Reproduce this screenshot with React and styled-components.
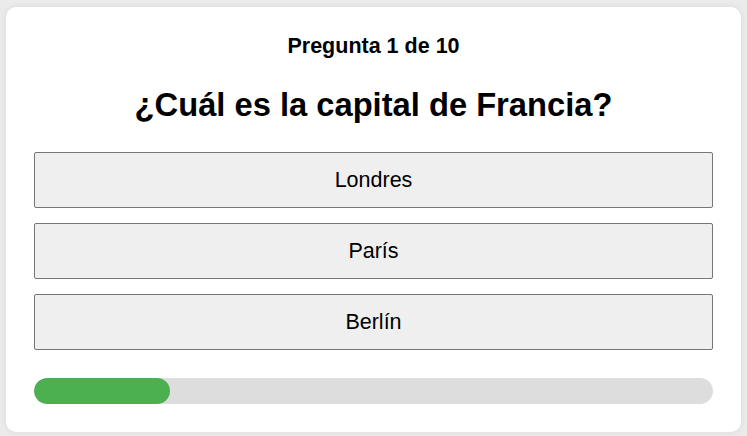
import React from 'react'
import styled, { createGlobalStyle } from 'styled-components'

const EstiloGlobal = createGlobalStyle`
    html, body {
        margin: 0;
        padding: 0;
        background-color: #ebebeb;
        font-family: "Liberation Sans", Arial, sans-serif;
    }
`

const Pagina = styled.div`
    padding: 7px 6px 4px 6px;
`

const Tarjeta = styled.div`
    display: flex;
    flex-direction: column;
    gap: 28px;
    padding: 27px 28px 28px 28px;
    background-color: white;
    border-radius: 10px;
    box-shadow: 0 0 6px rgba(0, 0, 0, 0.08);
`

const Contador = styled.h3`
    margin: 0;
    font-size: 21.5px;
    line-height: 24px;
    font-weight: bold;
    text-align: center;
    color: black;
`

const Pregunta = styled.h1`
    margin: 0;
    font-size: 32.7px;
    line-height: 38px;
    font-weight: bold;
    text-align: center;
    color: black;
`

const ListaOpciones = styled.div`
    display: flex;
    flex-direction: column;
    gap: 15px;
`

const BotaoOpcion = styled.button`
    height: 56px;
    width: 100%;
    font-family: "Liberation Sans", Arial, sans-serif;
    font-size: 21.5px;
    color: black;
    background-color: #efefef;
    border: 1px solid #767676;
    border-radius: 2px;
    cursor: pointer;
`

const BarraProgreso = styled.div`
    height: 26px;
    background-color: #dddddd;
    border-radius: 13px;
    overflow: hidden;
`

const Relleno = styled.div`
    height: 100%;
    background-color: #4caf50;
    border-radius: 13px;
`

const opciones = ["Londres", "París", "Berlín"]

class App extends React.Component {
    state = {
        actual: 1,
        total: 10,
        progreso: 20
    }

    render () {
        return (
            <Pagina>
                <EstiloGlobal />
                <Tarjeta>
                    <Contador>Pregunta {this.state.actual} de {this.state.total}</Contador>
                    <Pregunta>¿Cuál es la capital de Francia?</Pregunta>
                    <ListaOpciones>
                        {opciones.map((opcion) => (
                            <BotaoOpcion key={opcion}>{opcion}</BotaoOpcion>
                        ))}
                    </ListaOpciones>
                    <BarraProgreso>
                        <Relleno style={{ width: this.state.progreso + '%' }} />
                    </BarraProgreso>
                </Tarjeta>
            </Pagina>
        )
    }
}

export default App
